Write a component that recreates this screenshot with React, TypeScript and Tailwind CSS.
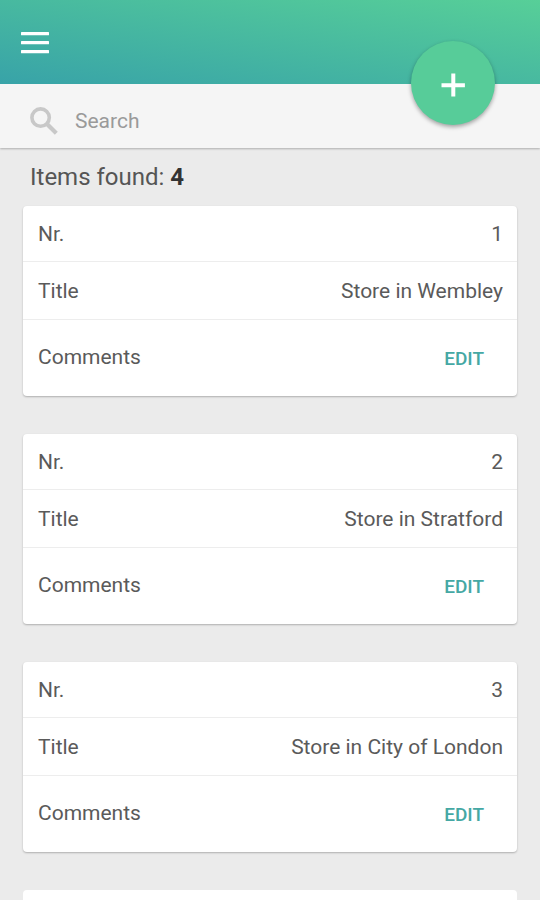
const stores = [
  { nr: 1, title: 'Store in Wembley' },
  { nr: 2, title: 'Store in Stratford' },
  { nr: 3, title: 'Store in City of London' },
]

function Header() {
  return (
    <header className="relative z-10 flex h-[84px] flex-shrink-0 items-center bg-[linear-gradient(to_top_right,#38a3a8,#57cf98)] pl-[21px]">
      <button aria-label="Menu" className="mt-px">
        <svg className="block h-[23px] w-7" viewBox="0 0 28 23" fill="#fff">
          <rect y="1" width="28" height="3.2" rx="0.5" />
          <rect y="10" width="28" height="3.2" rx="0.5" />
          <rect y="19" width="28" height="3.2" rx="0.5" />
        </svg>
      </button>

      {/* Floating add button, overlaps the search bar */}
      <button
        aria-label="Add"
        className="absolute top-[41px] right-[45px] flex h-[84px] w-[84px] items-center justify-center rounded-full bg-[#57cc99] shadow-[0_2px_4px_rgba(0,0,0,0.35)]"
      >
        <svg className="mt-1 h-6 w-6" viewBox="0 0 24 24" stroke="#fff" strokeWidth="4">
          <path d="M12.3 0.5v23M0.5 12.2h23.4" />
        </svg>
      </button>
    </header>
  )
}

function SearchIcon() {
  return (
    <svg className="h-7 w-7 text-[#c8c8c8]" viewBox="0 0 28 28" fill="none" stroke="currentColor">
      <circle cx="10.6" cy="10.6" r="8.7" strokeWidth="3.6" />
      <path d="M17 17L26.3 26.3" strokeWidth="4.2" />
    </svg>
  )
}

function StoreCard({ nr, title }: { nr: number; title: string }) {
  return (
    <div className="h-[190px] flex-shrink-0 divide-y divide-[#ededed] rounded bg-white shadow-[0_1px_2px_rgba(0,0,0,0.26)]">
      <div className="flex h-14 items-center justify-between pt-px pr-[14px] pl-[15px] leading-8">
        <span>Nr.</span>
        <span>{nr}</span>
      </div>
      <div className="flex h-[58px] items-center justify-between pt-px pr-[14px] pl-[15px] leading-8">
        <span>Title</span>
        <span>{title}</span>
      </div>
      <div className="flex h-[76px] items-center justify-between pt-0.5 pr-[33px] pl-[15px]">
        <span className="-mt-[3px]">Comments</span>
        <button className="text-[19px] font-medium text-[#45a8a4]">EDIT</button>
      </div>
    </div>
  )
}

export default function App() {
  return (
    <div className="flex h-[900px] w-[540px] flex-col overflow-hidden bg-[#ebebeb] font-['Roboto',sans-serif] text-[21px] text-[#5a5a5a]">
      <Header />

      <div className="flex h-16 flex-shrink-0 items-center bg-[#f5f5f5] pt-2.5 pl-[30px] shadow-[0_1px_2px_rgba(0,0,0,0.26)]">
        <SearchIcon />
        <span className="mt-px ml-[17px] text-[#9a9a9a]">Search</span>
      </div>

      <p className="mt-[13px] ml-[30px] flex-shrink-0 text-2xl leading-[33px] text-[#555]">
        Items found: <span className="font-bold text-[#333]">4</span>
      </p>

      {/* Results */}
      <div className="mx-[23px] mt-3 flex flex-col gap-[38px]">
        {stores.map((store) => (
          <StoreCard key={store.nr} nr={store.nr} title={store.title} />
        ))}
        {/* Top edge of the next card */}
        <div className="h-[190px] flex-shrink-0 rounded bg-white" />
      </div>
    </div>
  )
}
